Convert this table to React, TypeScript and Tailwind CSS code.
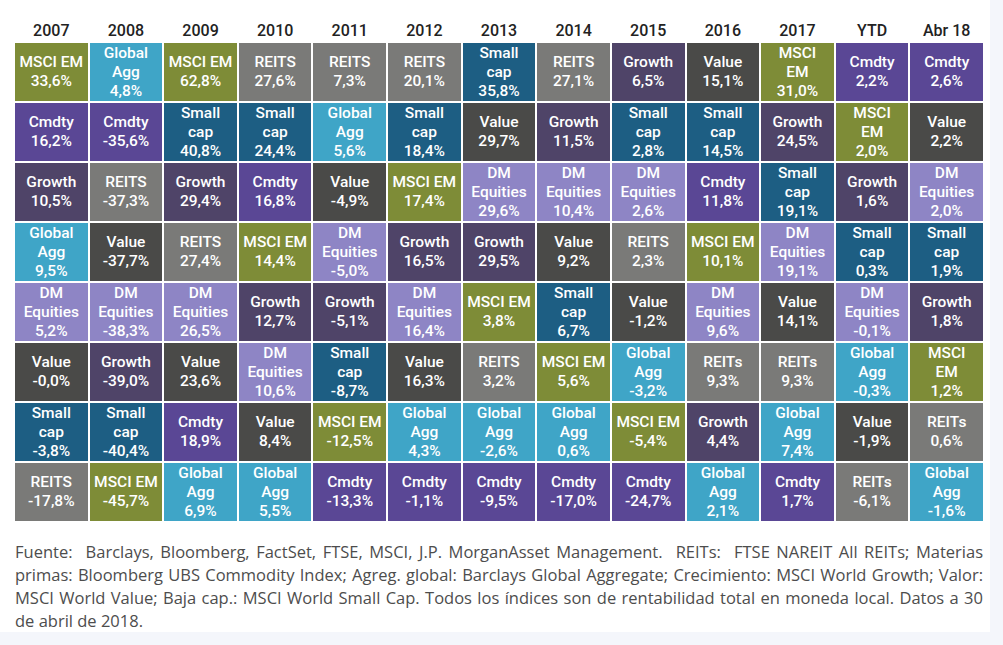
const C = {
  em: "bg-[#7e8c37]",
  agg: "bg-[#3fa5c7]",
  reit: "bg-[#7a7a78]",
  cmd: "bg-[#5a4795]",
  small: "bg-[#1d5e83]",
  growth: "bg-[#4f4468]",
  value: "bg-[#4a4a48]",
  dm: "bg-[#8e85c5]",
};

type Cell = [keyof typeof C, string, string];

const years = ["2007", "2008", "2009", "2010", "2011", "2012", "2013", "2014", "2015", "2016", "2017", "YTD", "Abr 18"];

// one array per column, top to bottom
const cols: Cell[][] = [
  [["em", "MSCI EM", "33,6%"], ["cmd", "Cmdty", "16,2%"], ["growth", "Growth", "10,5%"], ["agg", "Global\nAgg", "9,5%"], ["dm", "DM\nEquities", "5,2%"], ["value", "Value", "-0,0%"], ["small", "Small\ncap", "-3,8%"], ["reit", "REITS", "-17,8%"]],
  [["agg", "Global\nAgg", "4,8%"], ["cmd", "Cmdty", "-35,6%"], ["reit", "REITS", "-37,3%"], ["value", "Value", "-37,7%"], ["dm", "DM\nEquities", "-38,3%"], ["growth", "Growth", "-39,0%"], ["small", "Small\ncap", "-40,4%"], ["em", "MSCI EM", "-45,7%"]],
  [["em", "MSCI EM", "62,8%"], ["small", "Small\ncap", "40,8%"], ["growth", "Growth", "29,4%"], ["reit", "REITS", "27,4%"], ["dm", "DM\nEquities", "26,5%"], ["value", "Value", "23,6%"], ["cmd", "Cmdty", "18,9%"], ["agg", "Global\nAgg", "6,9%"]],
  [["reit", "REITS", "27,6%"], ["small", "Small\ncap", "24,4%"], ["cmd", "Cmdty", "16,8%"], ["em", "MSCI EM", "14,4%"], ["growth", "Growth", "12,7%"], ["dm", "DM\nEquities", "10,6%"], ["value", "Value", "8,4%"], ["agg", "Global\nAgg", "5,5%"]],
  [["reit", "REITS", "7,3%"], ["agg", "Global\nAgg", "5,6%"], ["value", "Value", "-4,9%"], ["dm", "DM\nEquities", "-5,0%"], ["growth", "Growth", "-5,1%"], ["small", "Small\ncap", "-8,7%"], ["em", "MSCI EM", "-12,5%"], ["cmd", "Cmdty", "-13,3%"]],
  [["reit", "REITS", "20,1%"], ["small", "Small\ncap", "18,4%"], ["em", "MSCI EM", "17,4%"], ["growth", "Growth", "16,5%"], ["dm", "DM\nEquities", "16,4%"], ["value", "Value", "16,3%"], ["agg", "Global\nAgg", "4,3%"], ["cmd", "Cmdty", "-1,1%"]],
  [["small", "Small\ncap", "35,8%"], ["value", "Value", "29,7%"], ["dm", "DM\nEquities", "29,6%"], ["growth", "Growth", "29,5%"], ["em", "MSCI EM", "3,8%"], ["reit", "REITS", "3,2%"], ["agg", "Global\nAgg", "-2,6%"], ["cmd", "Cmdty", "-9,5%"]],
  [["reit", "REITS", "27,1%"], ["growth", "Growth", "11,5%"], ["dm", "DM\nEquities", "10,4%"], ["value", "Value", "9,2%"], ["small", "Small\ncap", "6,7%"], ["em", "MSCI EM", "5,6%"], ["agg", "Global\nAgg", "0,6%"], ["cmd", "Cmdty", "-17,0%"]],
  [["growth", "Growth", "6,5%"], ["small", "Small\ncap", "2,8%"], ["dm", "DM\nEquities", "2,6%"], ["reit", "REITS", "2,3%"], ["value", "Value", "-1,2%"], ["agg", "Global\nAgg", "-3,2%"], ["em", "MSCI EM", "-5,4%"], ["cmd", "Cmdty", "-24,7%"]],
  [["value", "Value", "15,1%"], ["small", "Small\ncap", "14,5%"], ["cmd", "Cmdty", "11,8%"], ["em", "MSCI EM", "10,1%"], ["dm", "DM\nEquities", "9,6%"], ["reit", "REITs", "9,3%"], ["growth", "Growth", "4,4%"], ["agg", "Global\nAgg", "2,1%"]],
  [["em", "MSCI\nEM", "31,0%"], ["growth", "Growth", "24,5%"], ["small", "Small\ncap", "19,1%"], ["dm", "DM\nEquities", "19,1%"], ["value", "Value", "14,1%"], ["reit", "REITs", "9,3%"], ["agg", "Global\nAgg", "7,4%"], ["cmd", "Cmdty", "1,7%"]],
  [["cmd", "Cmdty", "2,2%"], ["em", "MSCI\nEM", "2,0%"], ["growth", "Growth", "1,6%"], ["small", "Small\ncap", "0,3%"], ["dm", "DM\nEquities", "-0,1%"], ["agg", "Global\nAgg", "-0,3%"], ["value", "Value", "-1,9%"], ["reit", "REITs", "-6,1%"]],
  [["cmd", "Cmdty", "2,6%"], ["value", "Value", "2,2%"], ["dm", "DM\nEquities", "2,0%"], ["small", "Small\ncap", "1,9%"], ["growth", "Growth", "1,8%"], ["em", "MSCI\nEM", "1,2%"], ["reit", "REITs", "0,6%"], ["agg", "Global\nAgg", "-1,6%"]],
];

const footer = [
  "Fuente:  Barclays, Bloomberg, FactSet, FTSE, MSCI, J.P. MorganAsset Management.  REITs:  FTSE NAREIT All REITs; Materias",
  "primas: Bloomberg UBS Commodity Index; Agreg. global: Barclays Global Aggregate; Crecimiento: MSCI World Growth; Valor:",
  "MSCI World Value; Baja cap.: MSCI World Small Cap. Todos los índices son de rentabilidad total en moneda local. Datos a 30",
];

export default function App() {
  return (
    <div className="w-[1003px] h-[645px] bg-[#f4f6fb] overflow-hidden">
      <div className="w-[990px] h-[632px] bg-white pl-[15px] pt-[19px]">
        <div className="w-[968px] grid grid-cols-[repeat(13,1fr)] gap-x-[2px] h-[22px] font-['Roboto',sans-serif] font-medium text-[16px] text-[#222]">
          {years.map((y) => (
            <div key={y} className="flex items-center justify-center">
              {y}
            </div>
          ))}
        </div>
        <div className="mt-[2px] w-[968px] grid grid-cols-[repeat(13,1fr)] grid-rows-[repeat(8,58px)] grid-flow-col gap-[2px] bg-white font-['Roboto',sans-serif] font-medium text-[15.5px] leading-[19px] text-white">
          {cols.flat().map(([k, label, v], i) => (
            <div
              key={i}
              className={`${C[k]} flex flex-col items-center justify-center text-center whitespace-pre-line`}
            >
              <span>{label}</span>
              <span>{v}</span>
            </div>
          ))}
        </div>
        <div className="mt-[19px] w-[968px] font-['Open_Sans',sans-serif] text-[16.5px] leading-[23px] text-[#4d4d4d]">
          {footer.map((l) => (
            <div key={l} className="whitespace-pre text-justify [text-align-last:justify]">
              {l}
            </div>
          ))}
          <div>de abril de 2018.</div>
        </div>
      </div>
    </div>
  );
}
